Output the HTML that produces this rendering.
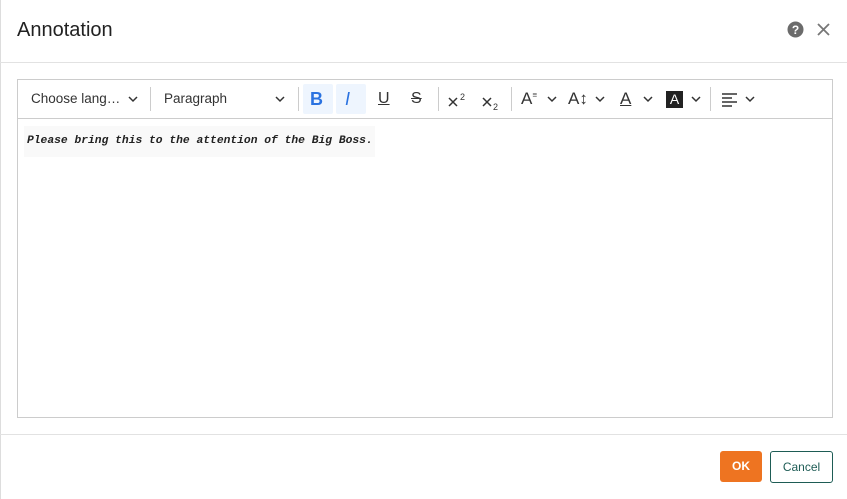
<!DOCTYPE html>
<html><head><meta charset="utf-8"><style>
*{box-sizing:border-box;margin:0;padding:0}
body{width:847px;height:499px;background:#fff;font-family:"Liberation Sans",sans-serif;position:relative;overflow:hidden}
.lb{position:absolute;left:0;top:0;width:1px;height:499px;background:#ddd}
.title{position:absolute;left:17px;top:19px;font-size:20px;color:#222}
.hs{position:absolute;left:0;right:0;top:62px;border-top:1px solid #e2e2e2}
.fs{position:absolute;left:0;right:0;top:434px;border-top:1px solid #e2e2e2}
.ed{position:absolute;left:17px;top:79px;width:816px;height:339px;border:1px solid #ccc}
.tb{height:39px;border-bottom:1px solid #ccc;position:relative;font-size:14px;color:#333}
.tb span{position:absolute;top:11px}
.sep{position:absolute;top:7px;width:1px;height:24px;background:#ccc}
.btnbg{position:absolute;top:4px;width:30px;height:30px;background:#eef5fe;border-radius:2px}
.txtbg{position:absolute;left:6px;top:46px;width:351px;height:31px;background:#f9f9f9}
.txt{position:absolute;left:9px;top:55px;font-family:"Liberation Mono",monospace;font-weight:bold;font-style:italic;font-size:11.3px;color:#222}
.ok{position:absolute;left:720px;top:451px;width:42px;height:31px;background:#ee7421;border-radius:3px;color:#fff;font-size:12px;font-weight:bold;text-align:center;line-height:31px}
.cancel{position:absolute;left:770px;top:451px;width:63px;height:32px;border:1px solid #1e5c55;border-radius:3px;color:#1e5c55;font-size:12px;text-align:center;line-height:30px}
</style></head><body>
<div class="lb"></div>
<div class="title">Annotation</div>
<svg style="position:absolute;left:787px;top:21px" width="17" height="17" viewBox="0 0 17 17"><circle cx="8.5" cy="8.5" r="8" fill="#6b6b6b"/><text x="8.5" y="13" text-anchor="middle" font-family="Liberation Sans" font-weight="bold" font-size="12" fill="#fff">?</text></svg>
<svg style="position:absolute;left:816px;top:22px" width="15" height="15" viewBox="0 0 15 15"><path d="M2 2L13 13M13 2L2 13" stroke="#777" stroke-width="1.8"/></svg>
<div class="hs"></div>
<div class="ed">
<div class="tb">
<span style="left:13px;font-size:13.5px">Choose lang…</span>
<svg style="position:absolute;left:110px;top:16px" width="10" height="7"><path d="M1 1L5 5L9 1" stroke="#333" stroke-width="1.5" fill="none"/></svg>
<div class="sep" style="left:132px"></div>
<span style="left:146px;font-size:13.5px">Paragraph</span>
<svg style="position:absolute;left:257px;top:16px" width="10" height="7"><path d="M1 1L5 5L9 1" stroke="#333" stroke-width="1.5" fill="none"/></svg>
<div class="sep" style="left:280px"></div>
<div class="btnbg" style="left:285px"></div>
<div class="btnbg" style="left:318px"></div>
<span style="left:292px;top:9px;font-size:18px;font-weight:bold;color:#2a72e0">B</span>
<span style="left:327px;top:9px;font-size:18px;font-style:italic;color:#2a72e0">I</span>
<span style="left:360px;top:10px;font-size:16px;text-decoration:underline">U</span>
<span style="left:393px;top:10px;font-size:16px;text-decoration:line-through">S</span>
<div class="sep" style="left:420px"></div>
<svg style="position:absolute;left:430px;top:12px" width="22" height="18"><path d="M1 6L9 14M9 6L1 14" stroke="#333" stroke-width="1.5"/><text x="12" y="8" font-family="Liberation Sans" font-size="9" fill="#333">2</text></svg>
<svg style="position:absolute;left:464px;top:12px" width="22" height="20"><path d="M1 6L9 14M9 6L1 14" stroke="#333" stroke-width="1.5"/><text x="11" y="18" font-family="Liberation Sans" font-size="9" fill="#333">2</text></svg>
<div class="sep" style="left:493px"></div>
<span style="left:503px;top:9px;font-size:17px">A<sup style="font-size:8px">≡</sup></span>
<svg style="position:absolute;left:529px;top:16px" width="10" height="7"><path d="M1 1L5 5L9 1" stroke="#333" stroke-width="1.5" fill="none"/></svg>
<span style="left:550px;top:9px;font-size:17px">A↕</span>
<svg style="position:absolute;left:577px;top:16px" width="10" height="7"><path d="M1 1L5 5L9 1" stroke="#333" stroke-width="1.5" fill="none"/></svg>
<span style="left:602px;top:9px;font-size:17px;text-decoration:underline">A</span>
<svg style="position:absolute;left:625px;top:16px" width="10" height="7"><path d="M1 1L5 5L9 1" stroke="#333" stroke-width="1.5" fill="none"/></svg>
<span style="left:648px;top:11px;width:17px;height:17px;background:#222;color:#fff;font-size:14px;text-align:center;line-height:17px">A</span>
<svg style="position:absolute;left:673px;top:16px" width="10" height="7"><path d="M1 1L5 5L9 1" stroke="#333" stroke-width="1.5" fill="none"/></svg>
<div class="sep" style="left:692px"></div>
<svg style="position:absolute;left:703px;top:12px" width="17" height="15"><path d="M1 2H16M1 6H11M1 10H16M1 14H11" stroke="#333" stroke-width="1.5"/></svg>
<svg style="position:absolute;left:727px;top:16px" width="10" height="7"><path d="M1 1L5 5L9 1" stroke="#333" stroke-width="1.5" fill="none"/></svg>
</div>
<div class="txtbg"></div>
<div class="txt">Please bring this to the attention of the Big Boss.</div>
</div>
<div class="fs"></div>
<div class="ok">OK</div>
<div class="cancel">Cancel</div>
</body></html>
